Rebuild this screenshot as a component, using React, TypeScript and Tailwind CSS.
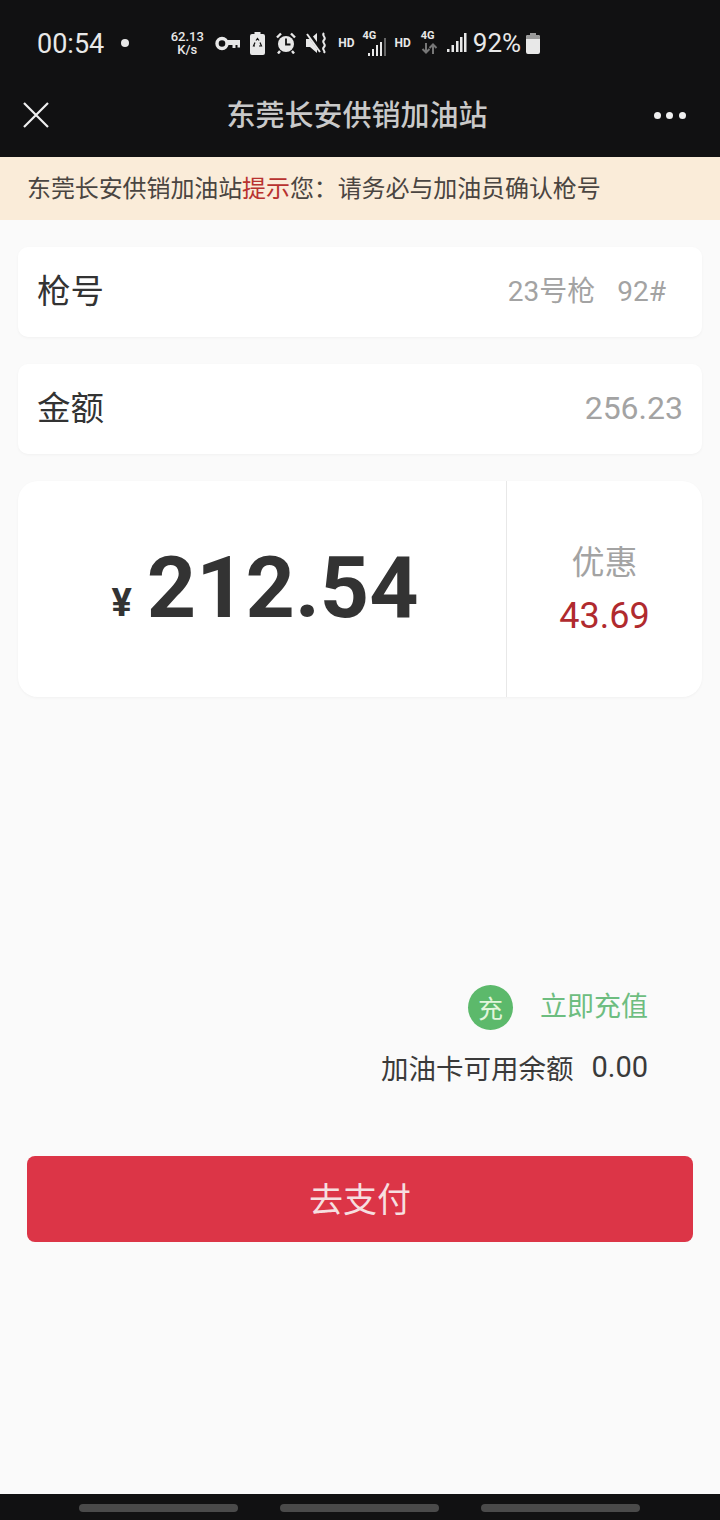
const cjk = { fontFamily: '"Noto Sans CJK SC", Roboto, sans-serif' };

function Signal({ className, bars, arrows }: { className: string; bars: boolean; arrows?: boolean }) {
  return (
    <div className={`relative h-[26px] ${bars ? "w-[25px]" : "w-[17px]"} ${className}`}>
      <span className="absolute left-0 top-0 text-[11px] font-bold leading-[12px]">4G</span>
      {arrows && (
        <svg className="absolute left-0 top-[13px]" width="17" height="11" viewBox="0 0 17 11" fill="none" stroke="#777" strokeWidth="2">
          <path d="M5 0v9M1.500 6l3.500 3.500L8.500 6M12 11V2M8.500 5L12 1.500 15.500 5" />
        </svg>
      )}
      {bars && (
        <div className="absolute left-[5px] top-[8px] flex h-[18px] items-end gap-[1.5px]">
          <div className="h-[3px] w-[2.500px] bg-[#e8e8e8]" />
          <div className="h-[7px] w-[2.500px] bg-[#e8e8e8]" />
          <div className="h-[11px] w-[2.500px] bg-[#e8e8e8]" />
          <div className="h-[14px] w-[2.500px] bg-[#e8e8e8]" />
          <div className="h-[18px] w-[2.500px] bg-[#666]" />
        </div>
      )}
    </div>
  );
}

function StatusIcons() {
  return (
    <div className="flex items-center text-[#e8e8e8]">
      <div className="flex w-[36px] flex-col items-center text-[13px] font-medium leading-[13px]">
        <span>62.13</span>
        <span>K/s</span>
      </div>
      {/* key */}
      <svg className="ml-[10px]" width="25" height="15" viewBox="0 0 25 15" fill="none">
        <circle cx="7" cy="7.500" r="5" stroke="#e8e8e8" strokeWidth="3.400" />
        <path d="M11 4h14v7.500h-2.500V9h-2v3h-3V9H11z" fill="#e8e8e8" />
      </svg>
      {/* battery saver */}
      <svg className="ml-[10px]" width="15" height="23" viewBox="0 0 15 23">
        <path d="M4.500 0h6v2H13a2 2 0 0 1 2 2v17a2 2 0 0 1-2 2H2a2 2 0 0 1-2-2V4a2 2 0 0 1 2-2h2.500z" fill="#e8e8e8" />
        <path d="M6 8.500l1.500-2 1.500 2M10 10.500l1.500 3.500H9M5 14H3.500L5 10.500" stroke="#111" strokeWidth="1.200" fill="none" />
      </svg>
      {/* alarm */}
      <svg className="ml-[11px]" width="20" height="22" viewBox="0 0 20 22">
        <circle cx="10" cy="12" r="8" fill="#e8e8e8" />
        <path d="M10 6.500V12.500h4.500" stroke="#111" strokeWidth="1.800" fill="none" />
        <path d="M1 5.500l4-4M19 5.500l-4-4M4 19l-2 2.500M16 19l2 2.500" stroke="#e8e8e8" strokeWidth="2.400" />
      </svg>
      {/* muted vibrate */}
      <svg className="ml-[10px]" width="21" height="22" viewBox="0 0 21 22">
        <path d="M0 7h4l7-6v20l-7-6H0z" fill="#e8e8e8" />
        <path d="M2 1l13 18" stroke="#111" strokeWidth="4" />
        <path d="M1 2l13 18" stroke="#e8e8e8" strokeWidth="2" />
        <path d="M18 1c-3 3 3 4 0 7s3 4 0 7 2 3 0 6" stroke="#e8e8e8" strokeWidth="2" fill="none" />
      </svg>
      <span className="ml-[11px] text-[12px] font-bold">HD</span>
      <Signal className="ml-[8px]" bars />
      <span className="ml-[7px] text-[12px] font-bold">HD</span>
      <Signal className="ml-[10px]" bars={false} arrows />
      <svg className="ml-[9px]" width="20" height="20" viewBox="0 0 20 20" fill="#e8e8e8">
        <rect x="0" y="16" width="2.500" height="3" />
        <rect x="4.500" y="12" width="2.500" height="7" />
        <rect x="9" y="8" width="2.500" height="11" />
        <rect x="13" y="4" width="2.500" height="15" />
        <rect x="17" y="0" width="2.500" height="19" />
      </svg>
      <span className="ml-[6px] text-[26px] leading-none">92%</span>
      <svg className="ml-[5px]" width="14" height="21" viewBox="0 0 14 21">
        <path d="M4 0h6v2h2a2 2 0 0 1 2 2v15a2 2 0 0 1-2 2H2a2 2 0 0 1-2-2V4a2 2 0 0 1 2-2h2z" fill="#e8e8e8" />
        <path d="M4 0h6v2h2a2 2 0 0 1 2 2v2H0V4a2 2 0 0 1 2-2h2z" fill="#9a9a9a" />
      </svg>
    </div>
  );
}

export default function App() {
  return (
    <div className="flex h-[1520px] w-[720px] flex-col bg-[#fafafa]" style={{ fontFamily: 'Roboto, "Noto Sans CJK SC", sans-serif' }}>
      <div className="h-[157px] shrink-0 bg-[#111112]">
        <div className="flex h-[86px] items-center pl-[37px] text-[#e8e8e8]">
          <span className="pt-[2px] text-[27px] leading-none">00:54</span>
          <span className="ml-[17px] h-[8px] w-[8px] rounded-full bg-[#e8e8e8]" />
          <div className="ml-[40px]">
            <StatusIcons />
          </div>
        </div>
        <div className="flex h-[58px] items-center justify-between pl-[23px] pr-[34px]">
          <svg width="26" height="26" viewBox="0 0 26 26" stroke="#f0f0f0" strokeWidth="2.200">
            <path d="M1 1l24 24M25 1L1 25" />
          </svg>
          <span className="ml-[11px] pb-[2px] text-[29px] font-medium text-[#c9c9c9]" style={cjk}>东莞长安供销加油站</span>
          <div className="flex gap-[5.500px]">
            <span className="h-[7px] w-[7px] rounded-full bg-[#f0f0f0]" />
            <span className="h-[7px] w-[7px] rounded-full bg-[#f0f0f0]" />
            <span className="h-[7px] w-[7px] rounded-full bg-[#f0f0f0]" />
          </div>
        </div>
      </div>

      <div className="flex h-[63px] shrink-0 items-center bg-[#faecd9] pb-[4px] pl-[27px] text-[24px] tracking-[-0.1px] text-[#4a4541]" style={cjk}>
        东莞长安供销加油站<span className="text-[#b8322f]">提示</span>您：请务必与加油员确认枪号
      </div>

      <div className="flex flex-col gap-[27px] pl-[18px] pr-[18px] pt-[27px]">
        <div className="flex h-[90px] items-center justify-between rounded-[10px] bg-white pl-[19px] pr-[36px] shadow-[0_1px_3px_rgba(0,0,0,0.04)]">
          <span className="pb-[6px] text-[33.500px] leading-[50px] text-[#333]" style={cjk}>枪号</span>
          <span className="text-[28px] text-[#a3a3a3]">23号枪<span className="ml-[22px]">92#</span></span>
        </div>
        <div className="flex h-[90px] items-center justify-between rounded-[10px] bg-white pl-[19px] pr-[19px] shadow-[0_1px_3px_rgba(0,0,0,0.04)]">
          <span className="pb-[6px] text-[33.500px] leading-[50px] text-[#333]" style={cjk}>金额</span>
          <span className="pb-[2px] text-[32px] text-[#a3a3a3]">256.23</span>
        </div>
        <div className="flex h-[216px] rounded-[20px] bg-white shadow-[0_1px_3px_rgba(0,0,0,0.04)]">
          <div className="flex w-[489px] items-center justify-center border-r border-[#e8e8e8] pb-[2px] pl-[6px] text-[#333]">
            <span className="mr-[15px] mt-[30px] text-[38px] font-bold leading-none">¥</span>
            <span className="text-[86px] font-bold leading-none">212.54</span>
          </div>
          <div className="flex flex-1 flex-col items-center justify-center pb-[2px]">
            <span className="text-[33px] leading-[44px] text-[#a3a3a3]" style={cjk}>优惠</span>
            <span className="mt-[11px] text-[36px] leading-[46px] text-[#b02a2e]">43.69</span>
          </div>
        </div>
      </div>

      <div className="mt-[288px] flex h-[45px] items-center justify-end pr-[72px]">
        <span className="flex h-[45px] w-[45px] items-center justify-center rounded-full bg-[#5cb96b] text-[25px] leading-[45px] text-[#e2f5dc]" style={cjk}>充</span>
        <span className="mb-[5px] ml-[27px] text-[27px] leading-[40px] text-[#6dbd80]" style={cjk}>立即充值</span>
      </div>
      <div className="mt-[17px] flex h-[40px] items-center justify-end pr-[72px] text-[#3a3a3a]">
        <span className="text-[27.500px] leading-[40px]" style={cjk}>加油卡可用余额</span>
        <span className="ml-[18px] text-[29px] leading-[40px]">0.00</span>
      </div>

      <div className="ml-[27px] mt-[69px] flex h-[86px] w-[666px] items-center justify-center rounded-[8px] bg-[#dc3547] pb-[4px] text-[34px] text-[#f6dfe0]" style={cjk}>
        去支付
      </div>

      <div className="mt-auto flex h-[26px] items-start justify-center gap-[42px] bg-[#111112] pr-[2px] pt-[10px]">
        <div className="h-[8px] w-[159px] rounded-full bg-[#4a4a4a]" />
        <div className="h-[8px] w-[159px] rounded-full bg-[#4a4a4a]" />
        <div className="h-[8px] w-[159px] rounded-full bg-[#4a4a4a]" />
      </div>
    </div>
  );
}
